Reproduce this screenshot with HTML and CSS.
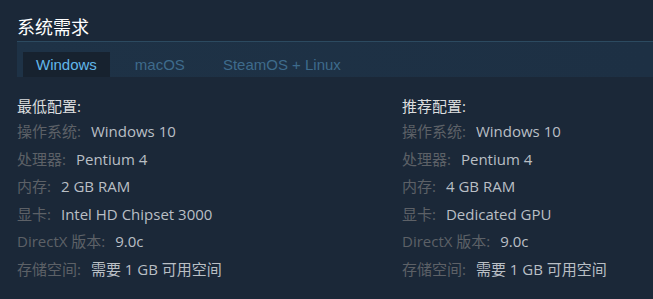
FILE: index.html
```html
<!DOCTYPE html>
<html lang="zh-CN">
<head>
<meta charset="utf-8">
<link rel="stylesheet" href="styles.css">
</head>
<body>
<div class="sysreq">
  <h2 class="title">系统需求</h2>
  <div class="tabbar">
    <div class="tab active">Windows</div>
    <div class="tab">macOS</div>
    <div class="tab">SteamOS + Linux</div>
  </div>
  <div class="cols">
    <div class="col">
      <div class="head">最低配置:</div>
      <ul class="list">
        <li><span class="lbl">操作系统:</span><span class="val">Windows 10</span></li>
        <li><span class="lbl">处理器:</span><span class="val">Pentium 4</span></li>
        <li><span class="lbl">内存:</span><span class="val">2 GB RAM</span></li>
        <li><span class="lbl">显卡:</span><span class="val">Intel HD Chipset 3000</span></li>
        <li><span class="lbl">DirectX 版本:</span><span class="val">9.0c</span></li>
        <li><span class="lbl">存储空间:</span><span class="val">需要 1 GB 可用空间</span></li>
      </ul>
    </div>
    <div class="col">
      <div class="head">推荐配置:</div>
      <ul class="list">
        <li><span class="lbl">操作系统:</span><span class="val">Windows 10</span></li>
        <li><span class="lbl">处理器:</span><span class="val">Pentium 4</span></li>
        <li><span class="lbl">内存:</span><span class="val">4 GB RAM</span></li>
        <li><span class="lbl">显卡:</span><span class="val">Dedicated GPU</span></li>
        <li><span class="lbl">DirectX 版本:</span><span class="val">9.0c</span></li>
        <li><span class="lbl">存储空间:</span><span class="val">需要 1 GB 可用空间</span></li>
      </ul>
    </div>
  </div>
</div>
</body>
</html>
```
FILE: styles.css
```css
html, body {
  margin: 0;
  padding: 0;
  background: #1b2838;
}
body {
  font-family: "Open Sans", "Noto Sans CJK SC", sans-serif;
  height: 299px;
  overflow: hidden;
}
.sysreq {
  padding-left: 17px;
}
.title {
  margin: 0;
  height: 41px;
  padding-top: 14px;
  box-sizing: border-box;
  font-size: 18px;
  line-height: 24px;
  font-weight: normal;
  color: #ffffff;
  font-family: "Noto Sans CJK SC", sans-serif;
}
.tabbar {
  height: 36px;
  box-sizing: border-box;
  padding: 10px 0 0 6px;
  display: flex;
  align-items: flex-end;
  gap: 12px;
  border-top: 1px solid #2c4a60;
  background: linear-gradient(90deg, #1e3246 0%, #1d3044 100%);
}
.tab {
  height: 25px;
  line-height: 25px;
  padding: 0 13px;
  font-family: "Liberation Sans", Arial, sans-serif;
  font-size: 15px;
  color: #3e6b8c;
}
.tab.active {
  background: #17222f;
  color: #62b7ea;
}
.cols {
  display: grid;
  grid-template-columns: 385px 1fr;
  padding-top: 18px;
}
.head {
  font-size: 15px;
  line-height: 23px;
  color: #dcdedf;
}
.list {
  list-style: none;
  margin: 0;
  padding: 0;
}
.list li {
  font-size: 15px;
  line-height: 27.5px;
  white-space: nowrap;
}
.lbl {
  color: #5d6167;
  margin-right: 10px;
}
.val {
  color: #b9bfc5;
}
```
